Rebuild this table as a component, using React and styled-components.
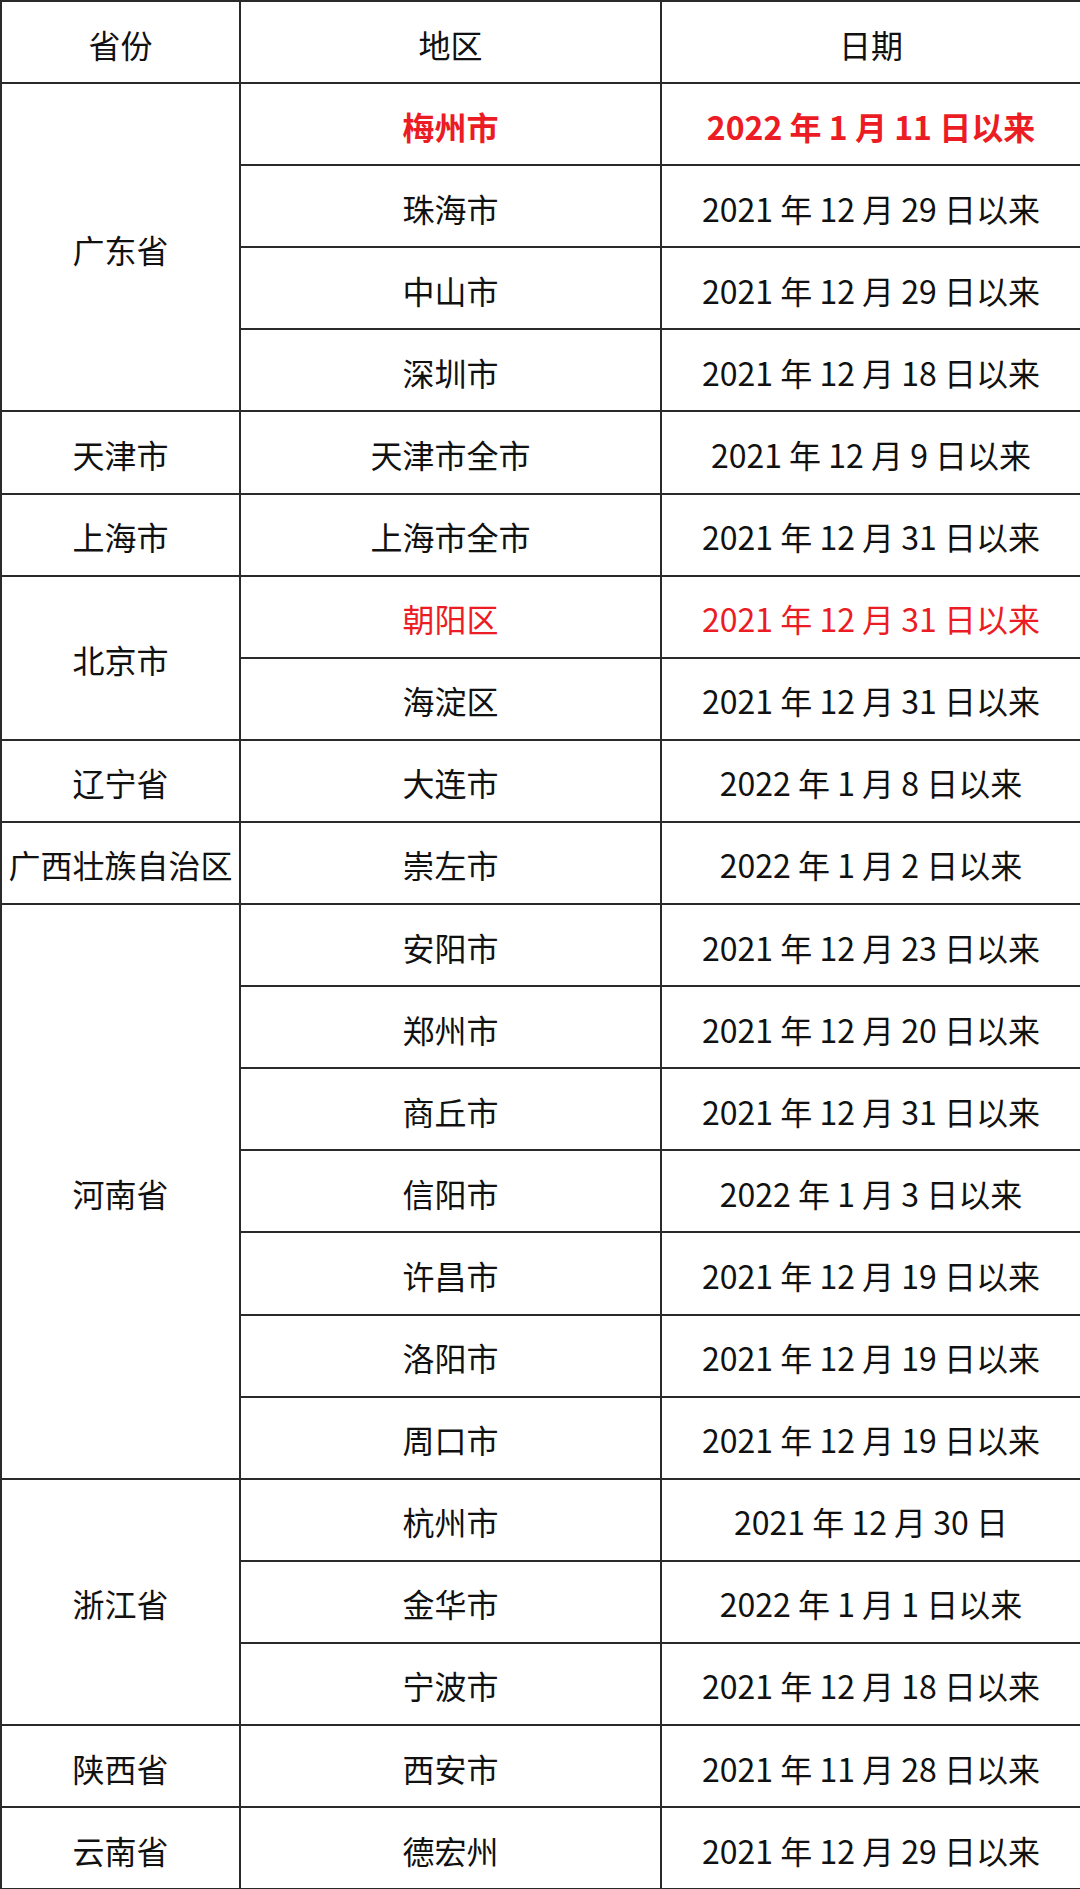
import React from "react";
import styled, { createGlobalStyle } from "styled-components";

const GlobalStyle = createGlobalStyle`
	html, body {
		margin: 0;
		padding: 0;
		background: #ffffff;
	}
	body {
		font-family: "Noto Sans CJK SC", "Noto Sans", sans-serif;
		color: #111;
	}
`;

const Sheet = styled.table`
	width: 1080px;
	border-collapse: collapse;
	table-layout: fixed;
	background: #fff;
`;

const Cell = styled.td`
	border: 2px solid #2a2a2a;
	height: 77.1px;
	padding: 3px 0 0;
	text-align: center;
	vertical-align: middle;
	font-size: 32px;
	line-height: 1;
	white-space: nowrap;
	color: ${(p) => (p.$red ? "#ec1c24" : "#111")};
	font-weight: ${(p) => (p.$bold ? 700 : 400)};
`;

const HeadCell = styled(Cell).attrs({ as: "th" })`
	font-weight: 400;
`;

const groups = [
	{
		province: "广东省",
		rows: [
			{ area: "梅州市", date: "2022 年 1 月 11 日以来", red: true, bold: true },
			{ area: "珠海市", date: "2021 年 12 月 29 日以来" },
			{ area: "中山市", date: "2021 年 12 月 29 日以来" },
			{ area: "深圳市", date: "2021 年 12 月 18 日以来" },
		],
	},
	{ province: "天津市", rows: [{ area: "天津市全市", date: "2021 年 12 月 9 日以来" }] },
	{ province: "上海市", rows: [{ area: "上海市全市", date: "2021 年 12 月 31 日以来" }] },
	{
		province: "北京市",
		rows: [
			{ area: "朝阳区", date: "2021 年 12 月 31 日以来", red: true },
			{ area: "海淀区", date: "2021 年 12 月 31 日以来" },
		],
	},
	{ province: "辽宁省", rows: [{ area: "大连市", date: "2022 年 1 月 8 日以来" }] },
	{ province: "广西壮族自治区", rows: [{ area: "崇左市", date: "2022 年 1 月 2 日以来" }] },
	{
		province: "河南省",
		rows: [
			{ area: "安阳市", date: "2021 年 12 月 23 日以来" },
			{ area: "郑州市", date: "2021 年 12 月 20 日以来" },
			{ area: "商丘市", date: "2021 年 12 月 31 日以来" },
			{ area: "信阳市", date: "2022 年 1 月 3 日以来" },
			{ area: "许昌市", date: "2021 年 12 月 19 日以来" },
			{ area: "洛阳市", date: "2021 年 12 月 19 日以来" },
			{ area: "周口市", date: "2021 年 12 月 19 日以来" },
		],
	},
	{
		province: "浙江省",
		rows: [
			{ area: "杭州市", date: "2021 年 12 月 30 日" },
			{ area: "金华市", date: "2022 年 1 月 1 日以来" },
			{ area: "宁波市", date: "2021 年 12 月 18 日以来" },
		],
	},
	{ province: "陕西省", rows: [{ area: "西安市", date: "2021 年 11 月 28 日以来" }] },
	{ province: "云南省", rows: [{ area: "德宏州", date: "2021 年 12 月 29 日以来" }] },
];

const App = () => {
	return (
		<>
			<GlobalStyle />
			<Sheet>
				<colgroup>
					<col style={{ width: 239 }} />
					<col style={{ width: 421 }} />
					<col style={{ width: 420 }} />
				</colgroup>
				<thead>
					<tr>
						<HeadCell>省份</HeadCell>
						<HeadCell>地区</HeadCell>
						<HeadCell>日期</HeadCell>
					</tr>
				</thead>
				<tbody>
					{groups.map((g) =>
						g.rows.map((r, i) => (
							<tr key={g.province + r.area}>
								{i === 0 && <Cell rowSpan={g.rows.length}>{g.province}</Cell>}
								<Cell $red={r.red} $bold={r.bold}>
									{r.area}
								</Cell>
								<Cell $red={r.red} $bold={r.bold}>
									{r.date}
								</Cell>
							</tr>
						))
					)}
				</tbody>
			</Sheet>
		</>
	);
};

export default App;
